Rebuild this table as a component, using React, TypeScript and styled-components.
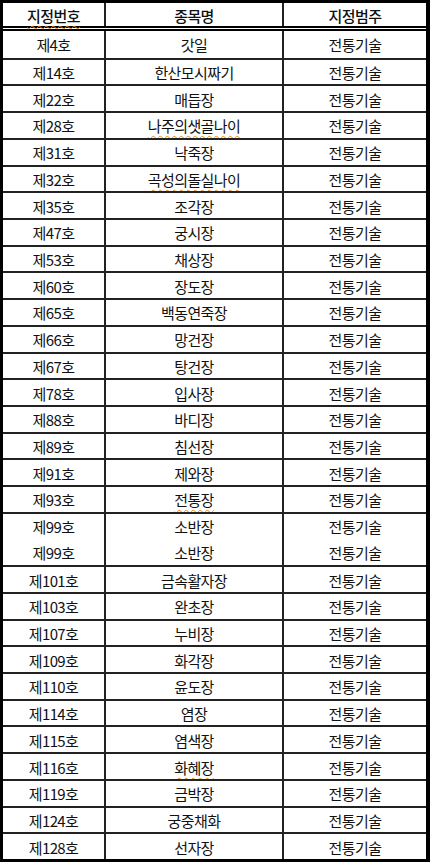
import { createGlobalStyle } from 'styled-components'
import styled from 'styled-components'

const GlobalStyle = createGlobalStyle`
  html, body {
    margin: 0;
    padding: 0;
    background: #fff;
  }
  body {
    font-family: 'Noto Sans CJK KR', 'Noto Sans', sans-serif;
    color: #111;
  }
`

const StyledTable = styled.div`
  box-sizing: border-box;
  width: 430px;
  height: 862px;
  border-style: solid;
  border-color: #000;
  border-width: 3px 4px 3px 3px;
  display: flex;
  flex-direction: column;
`

const StyledHeaderRow = styled.div`
  display: grid;
  grid-template-columns: 103px 178px 1fr;
  height: 28px;
  box-sizing: border-box;
  border-bottom: 5px double #000;
`

const StyledBody = styled.div`
  flex: 1;
  display: grid;
  grid-auto-rows: 1fr;
`

const StyledRow = styled.div<{ $noTop?: boolean; $first?: boolean }>`
  display: grid;
  grid-template-columns: 103px 178px 1fr;
  border-top: ${(p) => (p.$first || p.$noTop ? 'none' : '2px solid #222')};
`

const StyledCell = styled.div<{ $divider?: boolean; $head?: boolean }>`
  display: flex;
  align-items: center;
  justify-content: center;
  font-size: 15px;
  line-height: 1;
  font-weight: ${(p) => (p.$head ? 500 : 400)};
  letter-spacing: -0.6px;
  border-right: ${(p) => (p.$divider ? '2px solid #222' : 'none')};
  padding-top: 1px;
`

const StyledSpell = styled.span`
  text-decoration: underline wavy #e58a1c;
  text-decoration-thickness: 1px;
  text-underline-offset: 3px;
`

type Row = { no: string; name: string; spell?: boolean; noTop?: boolean }

const rows: Row[] = [
  { no: '제4호', name: '갓일' },
  { no: '제14호', name: '한산모시짜기' },
  { no: '제22호', name: '매듭장' },
  { no: '제28호', name: '나주의샛골나이', spell: true },
  { no: '제31호', name: '낙죽장' },
  { no: '제32호', name: '곡성의돌실나이', spell: true },
  { no: '제35호', name: '조각장' },
  { no: '제47호', name: '궁시장' },
  { no: '제53호', name: '채상장' },
  { no: '제60호', name: '장도장' },
  { no: '제65호', name: '백동연죽장' },
  { no: '제66호', name: '망건장' },
  { no: '제67호', name: '탕건장' },
  { no: '제78호', name: '입사장' },
  { no: '제88호', name: '바디장' },
  { no: '제89호', name: '침선장' },
  { no: '제91호', name: '제와장' },
  { no: '제93호', name: '전통장', spell: true },
  { no: '제99호', name: '소반장' },
  { no: '제99호', name: '소반장', noTop: true },
  { no: '제101호', name: '금속활자장' },
  { no: '제103호', name: '완초장' },
  { no: '제107호', name: '누비장' },
  { no: '제109호', name: '화각장' },
  { no: '제110호', name: '윤도장' },
  { no: '제114호', name: '염장' },
  { no: '제115호', name: '염색장' },
  { no: '제116호', name: '화혜장', spell: true },
  { no: '제119호', name: '금박장' },
  { no: '제124호', name: '궁중채화' },
  { no: '제128호', name: '선자장' },
]

export default function App() {
  return (
    <>
      <GlobalStyle />
      <StyledTable>
        <StyledHeaderRow>
          <StyledCell $head $divider>
            <StyledSpell>지정번호</StyledSpell>
          </StyledCell>
          <StyledCell $head $divider>
            종목명
          </StyledCell>
          <StyledCell $head>지정범주</StyledCell>
        </StyledHeaderRow>
        <StyledBody>
          {rows.map((r, i) => (
            <StyledRow key={i} $first={i === 0} $noTop={r.noTop}>
              <StyledCell $divider>{r.no}</StyledCell>
              <StyledCell $divider>
                {r.spell ? <StyledSpell>{r.name}</StyledSpell> : r.name}
              </StyledCell>
              <StyledCell>전통기술</StyledCell>
            </StyledRow>
          ))}
        </StyledBody>
      </StyledTable>
    </>
  )
}
